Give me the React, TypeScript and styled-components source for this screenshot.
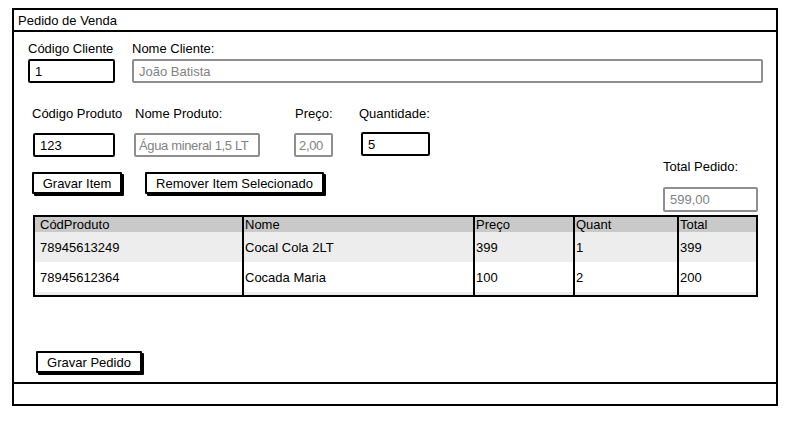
import React from 'react';
import styled, { createGlobalStyle } from 'styled-components';

const Global = createGlobalStyle`
  html, body { margin: 0; padding: 0; background: #fff; }
  body {
    font-family: "Liberation Sans", Arial, sans-serif;
    font-size: 13px;
    color: #000;
  }
`;

const Window = styled.div`
  box-sizing: border-box;
  margin: 8px 0 0 12px;
  width: 766px;
  height: 398px;
  border: 2px solid #000;
  display: flex;
  flex-direction: column;
`;

const TitleBar = styled.div`
  height: 20px;
  border-bottom: 2px solid #000;
  display: flex;
  align-items: center;
  padding-left: 4px;
`;

const Main = styled.div`
  flex: 1;
  display: flex;
  flex-direction: column;
  padding-top: 9px;
`;

const StatusBar = styled.div`
  height: 20px;
  border-top: 2px solid #000;
`;

const Row = styled.div<{ $ml: number; $mt: number }>`
  display: flex;
  align-items: flex-start;
  margin-left: ${(p) => p.$ml}px;
  margin-top: ${(p) => p.$mt}px;
`;

const Field = styled.div<{ $w: number; $ml?: number; $gap: number }>`
  display: flex;
  flex-direction: column;
  width: ${(p) => p.$w}px;
  margin-left: ${(p) => p.$ml ?? 0}px;
  gap: ${(p) => p.$gap}px;
`;

const Label = styled.div<{ $dx?: number }>`
  height: 16px;
  line-height: 16px;
  white-space: nowrap;
  margin-left: ${(p) => p.$dx ?? 0}px;
`;

const TextBox = styled.div<{ $muted?: boolean; $h?: number; $tight?: boolean }>`
  box-sizing: border-box;
  height: ${(p) => p.$h ?? 24}px;
  border: 2px solid ${(p) => (p.$muted ? '#8e8e8e' : '#000')};
  border-radius: 2px;
  padding: 0 ${(p) => (p.$tight ? 3 : 5)}px;
  letter-spacing: ${(p) => (p.$tight ? '-0.35px' : 'normal')};
  display: flex;
  align-items: center;
  white-space: nowrap;
  overflow: hidden;
  color: ${(p) => (p.$muted ? '#828282' : '#000')};
`;

const Section = styled.div`
  margin-left: 19px;
  width: 725px;
  display: flex;
  flex-direction: column;
`;

const ActionRow = styled.div`
  display: flex;
  justify-content: space-between;
  align-items: flex-start;
  margin-top: 2px;
  height: 53px;
`;

const ButtonGroup = styled.div`
  display: flex;
  gap: 23px;
  margin-top: 13px;
  margin-left: -1px;
`;

const Button = styled.div<{ $w: number }>`
  box-sizing: border-box;
  width: ${(p) => p.$w}px;
  height: 22px;
  border: 2px solid #000;
  border-radius: 1px;
  box-shadow: 2px 2px 0 #000;
  display: flex;
  align-items: center;
  justify-content: center;
  white-space: nowrap;
  background: #fff;
`;

const Table = styled.div`
  box-sizing: border-box;
  margin-top: 3px;
  width: 725px;
  height: 82px;
  border: 2px solid #000;
  overflow: hidden;
  display: grid;
  grid-template-columns: 207px 231px 100px 104px 79px;
  grid-template-rows: 15px 30px 30px 3px;
`;

const Cell = styled.div<{ $bg: string; $first: boolean }>`
  background: ${(p) => p.$bg};
  border-left: ${(p) => (p.$first ? 'none' : '2px solid #000')};
  padding-left: ${(p) => (p.$first ? 5 : 1)}px;
  display: flex;
  align-items: center;
  white-space: nowrap;
  overflow: hidden;
`;

const FooterRow = styled.div`
  margin-left: 22px;
  margin-top: 54px;
`;

const header = ['CódProduto', 'Nome', 'Preço', 'Quant', 'Total'];
const rows = [
  ['78945613249', 'Cocal Cola 2LT', '399', '1', '399'],
  ['78945612364', 'Cocada Maria', '100', '2', '200'],
  ['', '', '', '', ''],
];

export default function App() {
  const all = [header, ...rows];
  const bgs = ['#c9c9c9', '#ededed', '#ffffff', '#ededed'];
  return (
    <>
      <Global />
      <Window>
        <TitleBar>Pedido de Venda</TitleBar>
        <Main>
          <Row $ml={14} $mt={0}>
            <Field $w={87} $gap={2}>
              <Label>Código Cliente</Label>
              <TextBox>1</TextBox>
            </Field>
            <Field $w={631} $ml={17} $gap={2}>
              <Label>Nome Cliente:</Label>
              <TextBox $muted>João Batista</TextBox>
            </Field>
          </Row>
          <Row $ml={19} $mt={23}>
            <Field $w={82} $gap={11}>
              <Label $dx={-1}>Código Produto</Label>
              <TextBox>123</TextBox>
            </Field>
            <Field $w={126} $ml={19} $gap={11}>
              <Label $dx={1}>Nome Produto:</Label>
              <TextBox $muted $tight>Água mineral 1,5 LT</TextBox>
            </Field>
            <Field $w={39} $ml={34} $gap={11}>
              <Label $dx={1}>Preço:</Label>
              <TextBox $muted $tight>2,00</TextBox>
            </Field>
            <Field $w={69} $ml={28} $gap={10}>
              <Label $dx={-2}>Quantidade:</Label>
              <TextBox>5</TextBox>
            </Field>
          </Row>
          <Section>
            <ActionRow>
              <ButtonGroup>
                <Button $w={90}>Gravar Item</Button>
                <Button $w={179}>Remover Item Selecionado</Button>
              </ButtonGroup>
              <Field $w={95} $gap={12}>
                <Label>Total Pedido:</Label>
                <TextBox $muted $h={25}>599,00</TextBox>
              </Field>
            </ActionRow>
            <Table>
              {all.map((r, ri) =>
                r.map((c, ci) => (
                  <Cell key={`${ri}-${ci}`} $bg={bgs[ri]} $first={ci === 0}>
                    {c}
                  </Cell>
                ))
              )}
            </Table>
          </Section>
          <FooterRow>
            <Button $w={106}>Gravar Pedido</Button>
          </FooterRow>
        </Main>
        <StatusBar />
      </Window>
    </>
  );
}
